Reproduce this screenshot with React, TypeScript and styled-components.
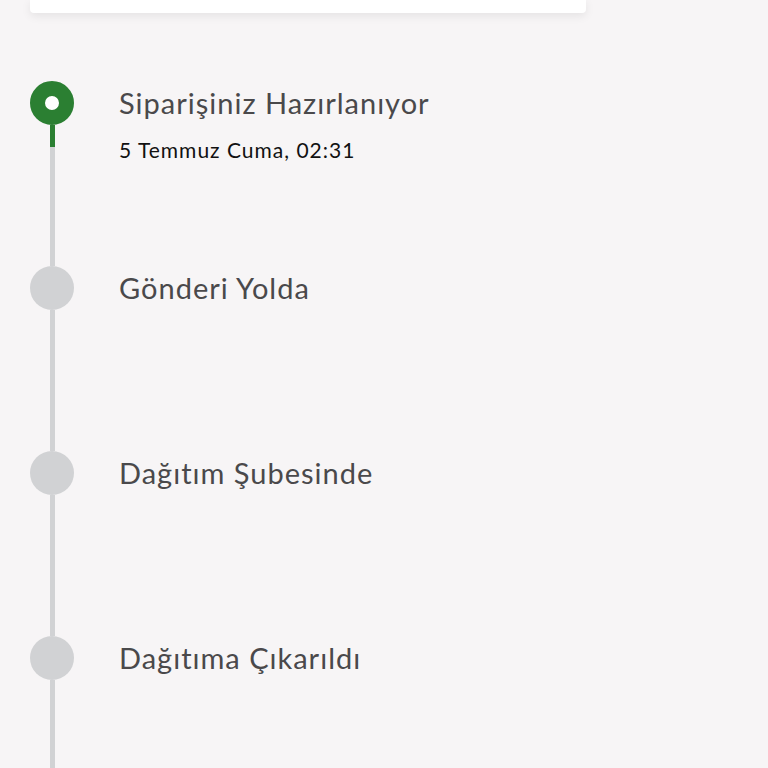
import styled, { createGlobalStyle } from "styled-components";

const GlobalStyle = createGlobalStyle`
  html, body {
    margin: 0;
    padding: 0;
    background: #f7f5f6;
    font-family: Lato, "Noto Sans", sans-serif;
  }
`;

const Page = styled.div`
  padding: 0 30px;
  height: 768px;
  overflow: hidden;
`;

const Card = styled.div`
  width: 556px;
  height: 13px;
  background: #fff;
  border-radius: 0 0 4px 4px;
  box-shadow: 0 3px 10px rgba(0, 0, 0, 0.08);
`;

const Timeline = styled.ul`
  list-style: none;
  margin: 68px 0 0;
  padding: 0;
`;

const Step = styled.li`
  display: flex;
  gap: 45px;
  height: 185px;
`;

const Marker = styled.div`
  display: flex;
  flex-direction: column;
  align-items: center;
  width: 44px;
  flex-shrink: 0;
`;

const Dot = styled.div<{ $active: boolean }>`
  width: 44px;
  height: 44px;
  border-radius: 50%;
  box-sizing: border-box;
  background: ${(p) => (p.$active ? "#fff" : "#d1d2d4")};
  border: ${(p) => (p.$active ? "15px solid #2b7f32" : "none")};
`;

const Connector = styled.div<{ $active: boolean }>`
  width: 5px;
  flex: 1;
  background: ${(p) =>
    p.$active
      ? "linear-gradient(to bottom, #2b7f32 0, #2b7f32 22px, #d1d2d4 22px)"
      : "#d1d2d4"};
`;

const Body = styled.div`
  display: flex;
  flex-direction: column;
`;

const Title = styled.div`
  font-size: 29px;
  line-height: 44px;
  letter-spacing: 1px;
  color: #4a494b;
`;

const Date = styled.div`
  margin-top: 12px;
  font-size: 21px;
  letter-spacing: 1px;
  color: #111;
`;

const steps = [
  { title: "Siparişiniz Hazırlanıyor", date: "5 Temmuz Cuma, 02:31", active: true },
  { title: "Gönderi Yolda" },
  { title: "Dağıtım Şubesinde" },
  { title: "Dağıtıma Çıkarıldı" },
];

export default function App() {
  return (
    <Page>
      <GlobalStyle />
      <Card />
      <Timeline>
        {steps.map((s) => (
          <Step key={s.title}>
            <Marker>
              <Dot $active={!!s.active} />
              <Connector $active={!!s.active} />
            </Marker>
            <Body>
              <Title>{s.title}</Title>
              {s.date && <Date>{s.date}</Date>}
            </Body>
          </Step>
        ))}
      </Timeline>
    </Page>
  );
}
